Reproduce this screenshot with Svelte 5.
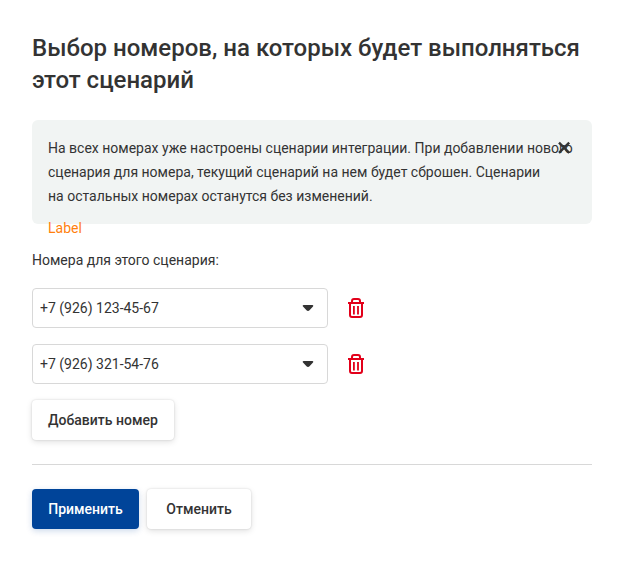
<script lang="ts">
  const options = ['+7 (926) 123-45-67', '+7 (926) 321-54-76'];

  let numbers = $state([...options]);
  let showNotice = $state(true);

  function add() {
    numbers.push(options[0]);
  }

  function remove(i: number) {
    numbers.splice(i, 1);
  }
</script>

<main class="page">
  <h1>Выбор номеров, на которых будет выполняться этот сценарий</h1>

  {#if showNotice}
    <div class="notice">
      <p>
        На всех номерах уже настроены сценарии интеграции. При добавлении нового
        сценария для номера, текущий сценарий на нем будет сброшен. Сценарии
        на&nbsp;остальных номерах останутся без изменений.
      </p>
      <button type="button" class="close" aria-label="Закрыть" onclick={() => (showNotice = false)}>
        <svg width="16" height="16" viewBox="0 0 16 16" fill="none" stroke="currentColor" stroke-width="2.4">
          <path d="M3 2.600l10.200 10.200M13.200 2.600L3 12.800" />
        </svg>
      </button>
      <a class="link" href="#label">Label</a>
    </div>
  {/if}

  <form onsubmit={(e) => e.preventDefault()}>
    <fieldset>
      <legend>Номера для этого сценария:</legend>

      {#each numbers as _, i}
        <div class="row">
          <div class="select">
            <select aria-label="Номер {i + 1}" bind:value={numbers[i]}>
              {#each options as o}
                <option value={o}>{o}</option>
              {/each}
            </select>
            <svg class="arrow" width="12" height="8" viewBox="0 0 12 8" fill="currentColor">
              <path d="M1.600 1h8.800c.9 0 1.200.900.600 1.500L7.500 6.300c-.8.900-2.200.900-3 0L1 2.500C.4 1.900.7 1 1.600 1z" />
            </svg>
          </div>
          <button type="button" class="trash" aria-label="Удалить номер" onclick={() => remove(i)}>
            <svg width="24" height="24" viewBox="0 0 24 24" fill="none" stroke="currentColor" stroke-width="2">
              <path d="M4 7h16" />
              <path d="M8 7V5a2 2 0 0 1 2-2h4a2 2 0 0 1 2 2v2" />
              <path d="M6 7v12a2 2 0 0 0 2 2h8a2 2 0 0 0 2-2V7" />
              <path d="M9.900 10v8.500M14 10v8.500" stroke-width="1.800" />
            </svg>
          </button>
        </div>
      {/each}

      <button type="button" class="btn" onclick={add}>Добавить номер</button>
    </fieldset>

    <div class="footer">
      <button type="submit" class="btn primary">Применить</button>
      <button type="button" class="btn cancel">Отменить</button>
    </div>
  </form>
</main>

<style>
  :global(body) {
    margin: 0;
    background: #fff;
  }

  .page {
    padding: 32px;
    color: #333;
    font: 14px/24px Roboto, sans-serif;
  }

  h1 {
    margin: 0 0 24px;
    font-size: 24px;
    font-weight: 500;
    line-height: 32px;
  }

  .notice {
    position: relative;
    margin-bottom: 24px;
    padding: 16px;
    border-radius: 6px;
    background: #f1f4f3;
  }
  .notice p {
    margin: 0;
  }

  .close {
    position: absolute;
    top: 20px;
    right: 20px;
    display: flex;
    padding: 0;
    border: 0;
    background: none;
    color: #333;
    cursor: pointer;
  }

  /* hangs over the lower edge of the notice */
  .link {
    position: absolute;
    left: 16px;
    bottom: -16px;
    color: #ff7f0e;
    text-decoration: none;
  }

  fieldset {
    margin: 0;
    padding: 0;
    border: 0;
  }
  legend {
    margin-bottom: 16px;
    padding: 0;
  }

  .row {
    display: flex;
    align-items: center;
    gap: 16px;
    margin-bottom: 16px;
  }

  .select {
    display: grid;
    align-items: center;
    flex: 0 1 296px;
  }
  .select > * {
    grid-area: 1 / 1;
  }
  .select select {
    appearance: none;
    width: 100%;
    height: 40px;
    padding: 0 32px 0 7px;
    border: 1px solid #d8d8d8;
    border-radius: 4px;
    background: #fff;
    color: inherit;
    font: inherit;
  }
  .arrow {
    justify-self: end;
    margin-right: 14px;
    pointer-events: none;
  }

  .trash {
    display: flex;
    padding: 0;
    border: 0;
    background: none;
    color: #e2001a;
    cursor: pointer;
  }

  .btn {
    height: 40px;
    padding: 0 16px;
    border: 0;
    border-radius: 4px;
    background: #fff;
    box-shadow: 0 0 2px rgba(0, 0, 0, 0.16), 0 2px 6px rgba(0, 0, 0, 0.12);
    color: #333;
    font: 500 14px/24px Roboto, sans-serif;
    cursor: pointer;
  }
  .btn.primary {
    min-width: 107px;
    background: #004499;
    box-shadow: 0 2px 6px rgba(0, 68, 153, 0.2);
    color: #fff;
  }
  .btn.cancel {
    min-width: 104px;
  }

  .footer {
    display: flex;
    gap: 8px;
    margin-top: 24px;
    padding-top: 24px;
    border-top: 1px solid #d8d8d8;
  }
</style>
